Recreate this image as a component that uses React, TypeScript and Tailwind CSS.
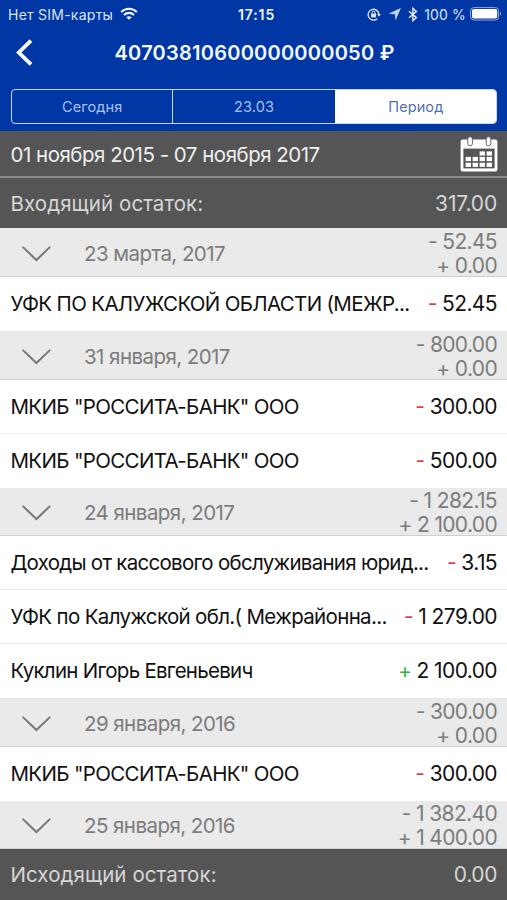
import React from "react";
import clsx from "clsx";

type Operation = { name: string; sign: "-" | "+"; sum: string; nameCls: string };
type Day = { date: string; out: string; inc: string; height: string; items: Operation[] };

const days: Day[] = [
  {
    date: "23 марта, 2017",
    out: "- 52.45",
    inc: "+ 0.00",
    height: "h-[49px]",
    items: [
      { name: "УФК ПО КАЛУЖСКОЙ ОБЛАСТИ (МЕЖР...", sign: "-", sum: "52.45", nameCls: "tracking-[-0.66px]" },
    ],
  },
  {
    date: "31 января, 2017",
    out: "- 800.00",
    inc: "+ 0.00",
    height: "h-[49px]",
    items: [
      { name: 'МКИБ "РОССИТА-БАНК" ООО', sign: "-", sum: "300.00", nameCls: "tracking-[-0.66px]" },
      { name: 'МКИБ "РОССИТА-БАНК" ООО', sign: "-", sum: "500.00", nameCls: "tracking-[-0.66px]" },
    ],
  },
  {
    date: "24 января, 2017",
    out: "- 1 282.15",
    inc: "+ 2 100.00",
    height: "h-[48px]",
    items: [
      { name: "Доходы от кассового обслуживания юрид...", sign: "-", sum: "3.15", nameCls: "tracking-[-0.72px]" },
      { name: "УФК по Калужской обл.( Межрайонна...", sign: "-", sum: "1 279.00", nameCls: "tracking-[-0.66px]" },
      { name: "Куклин Игорь Евгеньевич", sign: "+", sum: "2 100.00", nameCls: "tracking-[-0.74px]" },
    ],
  },
  {
    date: "29 января, 2016",
    out: "- 300.00",
    inc: "+ 0.00",
    height: "h-[49px]",
    items: [
      { name: 'МКИБ "РОССИТА-БАНК" ООО', sign: "-", sum: "300.00", nameCls: "tracking-[-0.66px]" },
    ],
  },
  {
    date: "25 января, 2016",
    out: "- 1 382.40",
    inc: "+ 1 400.00",
    height: "h-[48px]",
    items: [],
  },
];

const WifiIcon = () => (
  <svg width="18" height="14" viewBox="0 0 18 14" fill="none" stroke="#f1f5ff" strokeWidth="2.1">
    <path d="M1.2 5C5.6 0.7 12.4 0.7 16.8 5" />
    <path d="M4 8C6.9 5.2 11.1 5.2 14 8" />
    <path d="M9 12.8L6.3 10.2C7.8 8.8 10.2 8.8 11.7 10.2Z" fill="#f1f5ff" stroke="none" />
  </svg>
);

const LockIcon = () => (
  <svg width="14" height="13" viewBox="0 0 14 13" fill="none" stroke="#dbe5ff" strokeWidth="1.4">
    <path d="M10.2 10.7A5.4 5.4 0 1 1 11.9 6" />
    <path d="M9.9 6H14L12 8.6Z" fill="#dbe5ff" stroke="none" />
    <rect x="4.1" y="5.6" width="5" height="3.8" fill="#dbe5ff" stroke="none" />
    <path d="M5.1 6V4.7A1.5 1.5 0 0 1 8.1 4.7V6" strokeWidth="1" />
  </svg>
);

const LocationIcon = () => (
  <svg width="12" height="12" viewBox="0 0 12 12">
    <path d="M11.4 0.6L6.7 11.3L6.2 5.9L0.7 5.4Z" fill="#c6d6fc" stroke="#c6d6fc" strokeWidth="0.6" strokeLinejoin="round" />
  </svg>
);

const BluetoothIcon = () => (
  <svg width="10" height="15" viewBox="0 0 10 15" fill="none" stroke="#e6edff" strokeWidth="1.4">
    <path d="M1 4.2L8.4 10.6L4.9 13.7V1.3L8.4 4.4L1 10.8" />
  </svg>
);

const BatteryIcon = () => (
  <svg width="32" height="14" viewBox="0 0 32 14">
    <rect x="0.6" y="0.6" width="28" height="12.4" rx="3.2" fill="none" stroke="#8fa9e6" strokeWidth="1" />
    <rect x="2" y="2" width="25.2" height="9.6" rx="1.8" fill="#fff" />
    <path d="M30 4.8C31.3 5.2 31.3 8.4 30 8.8Z" fill="#8fa9e6" />
  </svg>
);

const CalendarIcon = () => (
  <svg width="38" height="36" viewBox="0 0 38 36">
    <rect x="0.6" y="3.4" width="36.8" height="32" rx="2" fill="#fff" />
    <rect x="3.4" y="12.6" width="31.2" height="19.8" fill="#555" />
    <rect x="7.8" y="0.8" width="4.6" height="9" rx="2.2" fill="#fff" stroke="#666" strokeWidth="1" />
    <rect x="26.2" y="0.8" width="4.6" height="9" rx="2.2" fill="#fff" stroke="#666" strokeWidth="1" />
    <g fill="#fff">
      <rect x="19.6" y="15.4" width="5.4" height="4.2" />
      <rect x="26.6" y="15.4" width="5.4" height="4.2" />
      <rect x="5.6" y="20.9" width="5.4" height="4.2" />
      <rect x="12.6" y="20.9" width="5.4" height="4.2" />
      <rect x="19.6" y="20.9" width="5.4" height="4.2" />
      <rect x="26.6" y="20.9" width="5.4" height="4.2" />
      <rect x="5.6" y="26.7" width="5.4" height="4.2" />
      <rect x="12.6" y="26.7" width="5.4" height="4.2" />
      <rect x="19.6" y="26.7" width="5.4" height="4.2" />
      <rect x="26.6" y="26.7" width="5.4" height="4.2" />
    </g>
  </svg>
);

const StatusBar = () => (
  <div className="grid h-[28px] grid-cols-[1fr_auto_1fr] items-center pr-[5px] pl-2 text-[14px] text-[#dbe5ff]">
    <div className="flex items-center gap-[7px]">
      <span className="tracking-[0.25px] whitespace-nowrap">Нет SIM-карты</span>
      <WifiIcon />
    </div>
    <span className="pl-[3px] font-semibold tracking-[0.9px] text-[#f1f5ff]">17:15</span>
    <div className="flex items-center justify-end">
      <LockIcon />
      <span className="ml-2">
        <LocationIcon />
      </span>
      <span className="ml-[7px]">
        <BluetoothIcon />
      </span>
      <span className="ml-[6px] tracking-[0.15px] whitespace-nowrap">100 %</span>
      <span className="ml-[4px]">
        <BatteryIcon />
      </span>
    </div>
  </div>
);

const DayHeader = ({ day }: { day: Day }) => (
  <div
    className={clsx(
      "flex items-center border-b border-[#cfcfcf] bg-[#eaeaea] pt-[3px] pr-[10px] pl-[22px] text-[#7c7c7c]",
      day.height
    )}
  >
    <svg width="29" height="16" viewBox="0 0 29 16" fill="none" stroke="#777" strokeWidth="2" strokeLinecap="round">
      <path d="M1.2 1.4L14.4 14L27.6 1.4" />
    </svg>
    <span className="ml-[33px] flex-1 pt-px text-[20.5px] tracking-[-0.56px]">{day.date}</span>
    <div className="text-right text-[21px] leading-6 tracking-[-0.65px]">
      <p>{day.out}</p>
      <p>{day.inc}</p>
    </div>
  </div>
);

const OperationRow = ({ item, last }: { item: Operation; last: boolean }) => (
  <div
    className={clsx(
      "flex h-[54px] items-center justify-between border-b bg-white pr-[10px] pl-[10.5px] text-[#111]",
      last ? "border-white" : "border-[#ececec]"
    )}
  >
    <span className={clsx("pt-[2px] text-[20.5px] whitespace-pre", item.nameCls)}>{item.name}</span>
    <span className="text-[21px] tracking-[-0.6px] whitespace-nowrap">
      <span className={item.sign === "-" ? "text-[#d8404c]" : "text-[#35b535]"}>{item.sign}</span>{" "}
      {item.sum}
    </span>
  </div>
);

const App = () => {
  return (
    <div className="flex h-[900px] w-[507px] flex-col overflow-hidden bg-white font-['Inter',sans-serif]">
      <header className="h-[131px] shrink-0 bg-[#0037a4]">
        <StatusBar />
        <div className="grid h-[48px] grid-cols-[40px_1fr_40px] items-center">
          <svg className="ml-4" width="17" height="27" viewBox="0 0 17 27" fill="none" stroke="#fff" strokeWidth="3.8">
            <path d="M15 1.6L2.8 13.5L15 25.4" />
          </svg>
          <h1 className="pt-px pl-[2px] text-center text-[20px] font-semibold tracking-[0.24px] whitespace-nowrap text-[#f4f8ff]">
            40703810600000000050 ₽
          </h1>
        </div>
        <div className="mt-[13px] mr-[10px] ml-[11px] grid h-[35px] grid-cols-3 overflow-hidden rounded-[4px] border border-[#c9d8ff] text-center text-[14.5px] leading-[33px] tracking-[0.1px] text-[#a9c0f5]">
          <span className="border-r border-[#c9d8ff]">Сегодня</span>
          <span>23.03</span>
          <span className="bg-white pl-px text-[#5270b4]">Период</span>
        </div>
      </header>

      <div className="flex h-[47px] shrink-0 items-center justify-between border-b-2 border-[#8b8b8b] bg-[#555] pr-[9px] pl-[10.5px] text-[#efefef]">
        <span className="pt-[3px] text-[20.5px] tracking-[-0.5px]">01 ноября 2015 - 07 ноября 2017</span>
        <CalendarIcon />
      </div>
      <div className="flex h-[50px] shrink-0 items-center justify-between bg-[#555] pt-px pr-[10px] pl-[10.5px] text-[#d6d6d6]">
        <span className="pt-px text-[20.5px] tracking-[0.08px]">Входящий остаток:</span>
        <span className="text-[21px] tracking-[-0.15px]">317.00</span>
      </div>

      <main className="shrink-0">
        {days.map((day) => (
          <section key={day.date}>
            <DayHeader day={day} />
            {day.items.map((item, i) => (
              <OperationRow key={i} item={item} last={i === day.items.length - 1} />
            ))}
          </section>
        ))}
      </main>

      <div className="flex flex-1 items-center justify-between bg-[#555] pt-px pr-[10px] pl-[10.5px] text-[#d6d6d6]">
        <span className="pt-px text-[20.5px] tracking-[0.08px]">Исходящий остаток:</span>
        <span className="text-[21px] tracking-[-0.4px]">0.00</span>
      </div>
    </div>
  );
};
export default App;
